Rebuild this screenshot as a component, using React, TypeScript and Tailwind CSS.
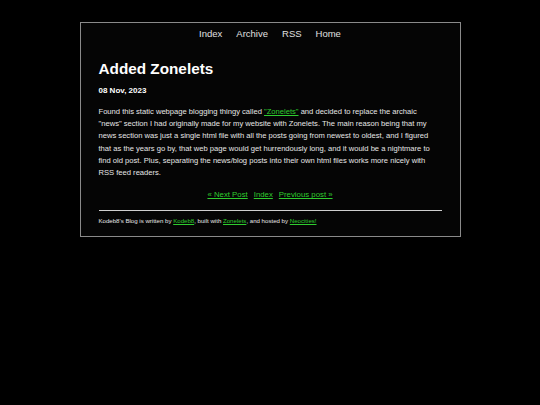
export default function App() {
  const link = "text-[#2fcc2f] underline";
  return (
    <div className="min-h-[405px] w-full bg-black pt-[22px] font-['Liberation_Sans',Arial,sans-serif] text-[#e6e6e6]">
      <div className="mx-auto w-[381px] border border-[#8a8a8a] bg-[#050505] px-[18px] pb-[11px]">
        <nav className="flex justify-center gap-[14px] pt-[4px] text-[9.5px] leading-[13px] text-[#e0e0e0]">
          <a>Index</a>
          <a>Archive</a>
          <a>RSS</a>
          <a>Home</a>
        </nav>

        <h1 className="mt-[20px] text-[15.3px] font-bold leading-[18px] text-white">Added Zonelets</h1>
        <p className="mt-[8px] text-[8px] font-bold leading-[10px] text-white">08 Nov, 2023</p>

        <p className="mt-[10px] text-[7.6px] leading-[12.2px]">
          Found this static webpage blogging thingy called{" "}
          <a className={link}>"Zonelets"</a> and decided to replace the archaic "news" section I had
          originally made for my website with Zonelets. The main reason being that my news section was just a
          single html file with all the posts going from newest to oldest, and I figured that as the years go by,
          that web page would get hurrendously long, and it would be a nightmare to find old post. Plus,
          separating the news/blog posts into their own html files works more nicely with RSS feed readers.
        </p>

        <div className="mt-[11px] flex justify-center gap-[6px] text-[7.8px] leading-[10px]">
          <a className={link}>« Next Post</a>
          <a className={link}>Index</a>
          <a className={link}>Previous post »</a>
        </div>

        <hr className="mt-[10px] border-t border-[#cfcfcf]" />

        <p className="mt-[6px] text-[6.1px] leading-[8px]">
          Kodeb8's Blog is written by <a className={link}>Kodeb8</a>, built with{" "}
          <a className={link}>Zonelets</a>, and hosted by <a className={link}>Neocities!</a>
        </p>
      </div>
    </div>
  );
}
